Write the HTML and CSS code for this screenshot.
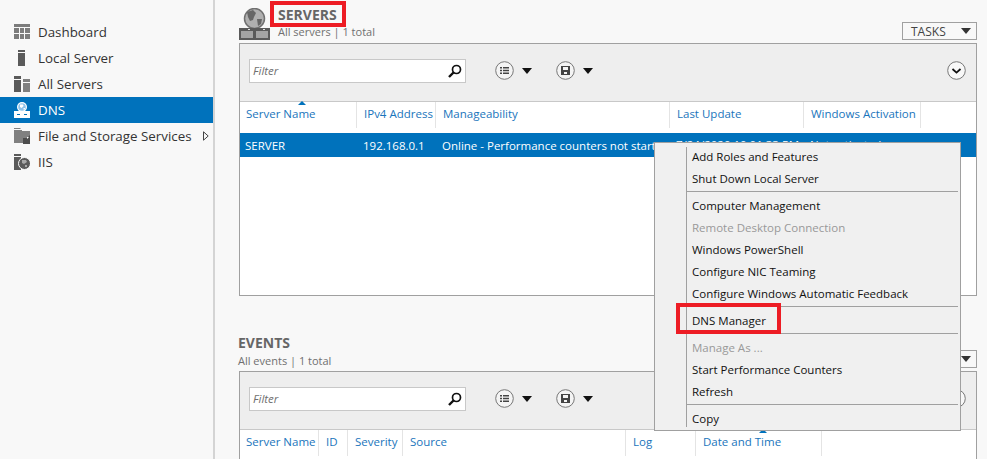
FILE: index.html
```html
<html>
<head>
	<title>Server Manager - DNS</title>
	<link rel="stylesheet" href="styles.css">
</head>
<body>
<div class="app">

<div class="nav">
	<div class="navrow">
		<svg class="navicon" viewBox="0 0 16 16"><path fill="#666" d="M0 0h16v3H0zM0 4h5v5H0zM6 4h4v5H6zM11 4h5v5h-5zM0 10h5v5H0zM6 10h4v5H6zM11 10h5v5h-5z" opacity=".85"/></svg>
		<span>Dashboard</span>
	</div>
	<div class="navrow">
		<svg class="navicon" viewBox="0 0 16 16"><path fill="#5a5a5a" d="M4 0h7v2H4zM4 3h7v13H4z"/></svg>
		<span>Local Server</span>
	</div>
	<div class="navrow">
		<svg class="navicon" viewBox="0 0 16 16"><path fill="#5a5a5a" d="M0 0h7v3H0zM0 4h7v12H0z"/><path fill="#808080" d="M9 3h7v3H9zM9 7h7v9H9z"/></svg>
		<span>All Servers</span>
	</div>
	<div class="navrow sel">
		<svg class="navicon" viewBox="0 0 16 16"><circle cx="8" cy="5" r="5" fill="#fff"/><circle cx="8" cy="5" r="3.8" fill="#8fc3ea"/><path fill="#fff" d="M6 2.5h3l.6 1.6-2 2-1.600-1zM9.500 6h1.500v1.500H9.500z"/><path fill="#fff" fill-rule="evenodd" d="M0 9h16v7H0zM3 12v1h3v-1zM10 12v1h3v-1z"/></svg>
		<span>DNS</span>
	</div>
	<div class="navrow">
		<svg class="navicon" viewBox="0 0 16 16"><path fill="#808080" d="M0 0h6l1 1h-7zM0 2h8v1h8v7H9v5H0z"/><path fill="#4d4d4d" d="M9 10h4l3-3v9H9z"/><path fill="#fff" d="M13 9h2l-2 2z"/></svg>
		<span>File and Storage Services</span>
		<svg class="navarrow" viewBox="0 0 6 10"><path fill="none" stroke="#444" d="M.5.8v8.4L5.2 5z"/></svg>
	</div>
	<div class="navrow">
		<svg class="navicon" viewBox="0 0 16 16"><path fill="#5a5a5a" d="M0 0h7v2H0zM0 3h7v13H0z"/><circle cx="10.500" cy="9.500" r="6" fill="#5a5a5a" stroke="#f8f8f8"/><path fill="#a8a8a8" d="M8 6h4l1 2-3 2-2-1zM11 11h2v2h-2z"/></svg>
		<span>IIS</span>
	</div>
</div>

<div class="main">

	<div class="head servers-head">
		<svg class="role-icon" viewBox="0 0 31 32">
			<circle cx="15.500" cy="10.500" r="10" fill="#b0b0b0" stroke="#707070" stroke-width="1.500"/>
			<path fill="#666" d="M8 4l6-2 3 3-2 4-1 3-3 1-2-4zM18 11h5l-1 5-3 2z"/>
			<path fill="#5a5a5a" d="M0 20h31v12H0z"/>
			<path fill="#a4a4a4" d="M2 23h12v7H2zM17 23h12v7H17z"/>
			<path fill="#e6e6e6" d="M9 21h2v1H9zM24 21h2v1h-2z"/>
		</svg>
		<div class="titles">
			<div class="title">SERVERS</div>
			<div class="sub">All servers | 1 total</div>
		</div>
		<div class="tasks">TASKS<i class="caret small"></i></div>
	</div>

	<div class="panel servers">
		<div class="toolbar">
			<div class="filter">
				<span>Filter</span>
				<svg class="glass" viewBox="0 0 14 14"><circle cx="8.500" cy="5.500" r="4" fill="none" stroke="#111" stroke-width="1.700"/><path stroke="#111" stroke-width="2.400" d="M5.500 8.500L1 13"/></svg>
			</div>
			<svg class="tool" viewBox="0 0 19 19"><circle cx="9.500" cy="9.500" r="8.800" fill="#f4f4f4" stroke="#777"/><path fill="#444" d="M5 6h2v1.600H5zM8 6h6v1.600H8zM5 8.700h2v1.600H5zM8 8.700h6v1.600H8zM5 11.400h2V13H5zM8 11.400h6V13H8z"/></svg>
			<i class="caret"></i>
			<svg class="tool gap" viewBox="0 0 19 19"><circle cx="9.500" cy="9.500" r="8.800" fill="#f4f4f4" stroke="#777"/><path fill="#444" fill-rule="evenodd" d="M5 5h9v9H5zM7 6v3h5V6zM8 11v2h3v-2z"/></svg>
			<i class="caret"></i>
			<svg class="tool expand" viewBox="0 0 19 19"><circle cx="9.500" cy="9.500" r="8.800" fill="#f8f8f8" stroke="#777"/><path fill="none" stroke="#111" stroke-width="1.800" d="M5.500 8l4 3.600 4-3.600"/></svg>
		</div>
		<div class="cols">
			<div class="col c1 sorted">Server Name</div>
			<div class="col c2">IPv4 Address</div>
			<div class="col c3">Manageability</div>
			<div class="col c4">Last Update</div>
			<div class="col c5">Windows Activation</div>
		</div>
		<div class="row">
			<div class="c1">SERVER</div>
			<div class="c2">192.168.0.1</div>
			<div class="c3">Online - Performance counters not started</div>
			<div class="c4">7/24/2020 10:01:33 PM</div>
			<div class="c5">Not activated</div>
		</div>
	</div>

	<div class="head events-head">
		<div class="titles">
			<div class="title">EVENTS</div>
			<div class="sub">All events | 1 total</div>
		</div>
		<div class="tasks">TASKS<i class="caret small"></i></div>
	</div>

	<div class="panel events">
		<div class="toolbar">
			<div class="filter">
				<span>Filter</span>
				<svg class="glass" viewBox="0 0 14 14"><circle cx="8.500" cy="5.500" r="4" fill="none" stroke="#111" stroke-width="1.700"/><path stroke="#111" stroke-width="2.400" d="M5.500 8.500L1 13"/></svg>
			</div>
			<svg class="tool" viewBox="0 0 19 19"><circle cx="9.500" cy="9.500" r="8.800" fill="#f4f4f4" stroke="#777"/><path fill="#444" d="M5 6h2v1.600H5zM8 6h6v1.600H8zM5 8.700h2v1.600H5zM8 8.700h6v1.600H8zM5 11.400h2V13H5zM8 11.400h6V13H8z"/></svg>
			<i class="caret"></i>
			<svg class="tool gap" viewBox="0 0 19 19"><circle cx="9.500" cy="9.500" r="8.800" fill="#f4f4f4" stroke="#777"/><path fill="#444" fill-rule="evenodd" d="M5 5h9v9H5zM7 6v3h5V6zM8 11v2h3v-2z"/></svg>
			<i class="caret"></i>
			<svg class="tool expand" viewBox="0 0 19 19"><circle cx="9.500" cy="9.500" r="8.800" fill="#f8f8f8" stroke="#777"/><path fill="none" stroke="#111" stroke-width="1.800" d="M5.500 8l4 3.600 4-3.600"/></svg>
		</div>
		<div class="cols">
			<div class="col e1">Server Name</div>
			<div class="col e2">ID</div>
			<div class="col e3">Severity</div>
			<div class="col e4">Source</div>
			<div class="col e5">Log</div>
			<div class="col e6 sorted">Date and Time</div>
		</div>
	</div>

</div>
</div>

<div class="menu">
	<div class="item">Add Roles and Features</div>
	<div class="item">Shut Down Local Server</div>
	<div class="sep"></div>
	<div class="item">Computer Management</div>
	<div class="item off">Remote Desktop Connection</div>
	<div class="item">Windows PowerShell</div>
	<div class="item">Configure NIC Teaming</div>
	<div class="item">Configure Windows Automatic Feedback</div>
	<div class="sep"></div>
	<div class="item">DNS Manager</div>
	<div class="sep"></div>
	<div class="item off">Manage As ...</div>
	<div class="item">Start Performance Counters</div>
	<div class="item">Refresh</div>
	<div class="sep"></div>
	<div class="item">Copy</div>
</div>

<div class="redbox box-servers"></div>
<div class="redbox box-dns"></div>

</body>
</html>
```

FILE: styles.css
```css
html, body {margin:0; height:459px; overflow:hidden;}
body {position:relative; background:#f8f8f8; color:#333; font-family:"Open Sans","Noto Sans",sans-serif; font-size:11.5px;}
.app {display:flex; height:459px;}

/* left nav */
.nav {width:213px; padding-top:19px; border-right:2px solid #d4d4d4; flex-shrink:0;}
.navrow {height:26px; display:flex; align-items:center; padding-left:14px; font-size:13.35px; color:#333; white-space:nowrap;}
.navrow.sel {background:#0072bc; color:#fff;}
.navicon {width:16px; height:16px; margin-right:8px; flex-shrink:0;}
.navarrow {width:6px; height:10px; margin-left:11px;}

/* main column */
.main {flex:1; padding:0 10px 0 23px; min-width:0;}
.head {display:flex; align-items:flex-end; box-sizing:border-box;}
.servers-head {height:43px; padding-bottom:3px;}
.events-head {height:75px; padding-bottom:2px;}
.role-icon {width:31px; height:32px; margin:0 8px 0 1px; flex-shrink:0;}
.titles {flex:1;}
.title {font-weight:700; font-size:14px; line-height:18px; color:#666;}
.events-head .title {margin-bottom:1px;}
.sub {font-size:11px; line-height:16px; color:#707070;}
.tasks {width:75px; height:18px; box-sizing:border-box; border:1px solid #a0a0a0; background:#f8f8f8; color:#444; font-size:12px; padding:0 5px 0 8px; display:flex; align-items:center; justify-content:space-between;}
.events-head .tasks {margin-bottom:1px;}

.panel {border:1px solid #a0a0a0; background:#fff; margin-left:1px;}
.servers {height:251px;}
.events {border-bottom:0; height:88px;}
.toolbar {height:53px; padding:0 10px 4px 9px; background:#eeeeee; border-bottom:1px solid #c8c8c8; display:flex; align-items:center;}
.filter {width:217px; height:24px; box-sizing:border-box; border:1px solid #c8c8c8; background:#fff; display:flex; align-items:center; justify-content:space-between; padding:0 3px; font-style:italic; color:#707070; margin-right:29px;}
.glass {width:14px; height:14px;}
.tool {width:19px; height:19px; flex-shrink:0;}
.tool.gap {margin-left:24px;}
.tool.expand {margin-left:auto;}
.caret {width:0; height:0; border:5px solid transparent; border-top:6px solid #111; border-bottom:0; margin-left:8px; display:block; flex-shrink:0;}
.caret.small {border-top-color:#333; margin:0;}

/* column headers */
.cols {display:flex; height:31px; background:#fff; color:#1a75bc;}
.col {box-sizing:border-box; padding:3px 0 0 7px; line-height:18px; border-right:1px solid #e4e4e4; height:26px; position:relative; white-space:nowrap;}
.cols .col:first-child {padding-left:6px;}
.sorted:before {content:""; position:absolute; top:-1px; left:50%; border:4px solid transparent; border-bottom:4px solid #0072bc; border-top:0;}
.c1 {width:117px;}
.c2 {width:79px;}
.c3 {width:234px;}
.c4 {width:134px;}
.c5 {width:117px;}
.e1 {width:79px;}
.e2 {width:29px;}
.e3 {width:55px;}
.e4 {width:223px;}
.e5 {width:70px;}
.e6 {width:126px;}
.row {display:flex; height:24px; background:#0072bc; color:#fff; line-height:25px; white-space:nowrap;}
.row div {box-sizing:border-box; padding-left:6px; overflow:hidden;}
.row div:first-child {padding-left:5px;}
.row .c4, .row .c5 {line-height:23px;}

/* context menu */
.menu {position:absolute; left:654px; top:142px; width:307px; height:289px; box-sizing:border-box; border:1px solid #a0a0a0; background:#f0f0f0; padding:3px 2px 0 32px; color:#111;}
.menu:before {content:""; position:absolute; left:31px; top:4px; bottom:3px; border-left:1px solid #a0a0a0;}
.item {height:22px; line-height:22px; padding-left:5px; white-space:nowrap;}
.item.off {color:#999;}
.sep {height:1px; background:#a0a0a0; margin:1px 0 3px;}

/* red marks on the screenshot */
.redbox {position:absolute; border:4px solid #ed1c24; box-sizing:border-box;}
.box-servers {left:270px; top:1px; width:76px; height:26px;}
.box-dns {left:676px; top:303px; width:105px; height:31px;}
```
